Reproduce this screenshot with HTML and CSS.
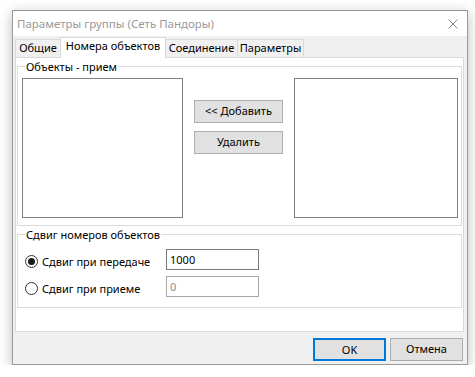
FILE: index.html
```html
<!DOCTYPE html>
<html>
<head>
<meta charset="utf-8">
<link rel="stylesheet" href="styles.css">
</head>
<body>
<div class="window">
  <div class="titlebar">
    <span class="title">Параметры группы (Сеть Пандоры)</span>
    <svg class="close" width="10" height="10" viewBox="0 0 10 10"><path d="M0.5 0.5 L9.5 9.5 M9.5 0.5 L0.5 9.5" stroke="#808080" stroke-width="1"/></svg>
  </div>
  <div class="body">
    <div class="tabs">
      <div class="tab t1">Общие</div>
      <div class="tab t2 active">Номера объектов</div>
      <div class="tab t3">Соединение</div>
      <div class="tab t4">Параметры</div>
    </div>
    <div class="panel">
      <fieldset class="group g1">
        <legend>Объекты - прием</legend>
        <div class="g1-inner">
          <div class="list left"></div>
          <div class="btns">
            <div class="btn">&lt;&lt; Добавить</div>
            <div class="btn">Удалить</div>
          </div>
          <div class="list right"></div>
        </div>
      </fieldset>
      <fieldset class="group g2">
        <legend>Сдвиг номеров объектов</legend>
        <div class="g2-inner">
          <div class="opt"><span class="radio checked"></span><span>Сдвиг при передаче</span></div>
          <div class="field">1000</div>
          <div class="opt"><span class="radio"></span><span>Сдвиг при приеме</span></div>
          <div class="field disabled">0</div>
        </div>
      </fieldset>
    </div>
    <div class="footer">
      <div class="btn dlg ok">OK</div>
      <div class="btn dlg">Отмена</div>
    </div>
  </div>
</div>
</body>
</html>
```
FILE: styles.css
```css
* { box-sizing: border-box; }
html, body { margin: 0; padding: 0; background: #fff; }
body {
  font-family: "Noto Sans", "Open Sans", sans-serif;
  font-size: 11px;
  color: #000;
}
.window {
  margin: 10px 0 0 12px;
  width: 456px;
  height: 355px;
  border: 1px solid #9a9a9a;
  background: #f0f0f0;
  box-shadow: 0 3px 12px rgba(0,0,0,0.28);
  display: flex;
  flex-direction: column;
}
.titlebar {
  height: 25px;
  flex: none;
  background: #fff;
  display: flex;
  align-items: center;
  justify-content: space-between;
  padding: 0 9px 0 4px;
}
.title { color: #999; line-height: 16px; font-size: 11.5px; }
.close { display: block; }
.body {
  flex: 1;
  display: flex;
  flex-direction: column;
  padding: 0 3px 0 2px;
}
.tabs {
  height: 21px;
  flex: none;
  display: flex;
  align-items: flex-end;
}
.tab {
  height: 18px;
  border: 1px solid #d9d9d9;
  border-bottom: none;
  background: #f0f0f0;
  text-align: center;
  line-height: 16px;
  white-space: nowrap;
  margin-left: -1px;
}
.t1 { width: 46px; margin-left: 0; }
.t2 { width: 106px; }
.t3 { width: 73px; }
.t4 { width: 67px; }
.tab.active {
  height: 21px;
  background: #fff;
  margin-bottom: -1px;
  position: relative;
  z-index: 1;
  line-height: 15px;
}
.panel {
  height: 275px;
  flex: none;
  background: #fff;
  border: 1px solid #d9d9d9;
  padding: 0 1px;
}
.group {
  margin: 0;
  padding: 0;
  border: 1px solid #dcdcdc;
  min-width: 0;
}
.group legend {
  margin-left: 7px;
  padding: 0 1px;
  line-height: 17px;
  height: 17px;
}
.g1 { height: 168px; }
.g1-inner {
  display: flex;
  padding: 3px 3px 0 4px;
  gap: 11px;
}
.list {
  height: 140px;
  border: 1px solid #828282;
  background: #fff;
}
.list.left { width: 161px; }
.list.right { width: 164px; }
.btns {
  width: 89px;
  padding-top: 22px;
  display: flex;
  flex-direction: column;
  gap: 8px;
}
.btn {
  height: 23px;
  background: #e1e1e1;
  border: 1px solid #adadad;
  text-align: center;
  line-height: 20px;
  white-space: nowrap;
}
.g2 { height: 82px; }
.g2-inner {
  display: grid;
  grid-template-columns: 148px 93px;
  grid-auto-rows: 21px;
  row-gap: 6px;
  padding: 6px 0 0 0;
}
.opt {
  display: flex;
  align-items: center;
  gap: 4px;
  padding: 3px 0 0 7px;
}
.radio {
  width: 13px;
  height: 13px;
  border-radius: 50%;
  border: 1px solid #333;
  background: #fff;
  display: flex;
  align-items: center;
  justify-content: center;
  flex: none;
}
.radio.checked::after {
  content: "";
  width: 7px;
  height: 7px;
  border-radius: 50%;
  background: #1a1a1a;
}
.field {
  border: 1px solid #7a7a7a;
  background: #fff;
  padding-left: 3px;
  line-height: 19px;
}
.field.disabled {
  border-color: #a8a8a8;
  color: #8c8c8c;
}
.footer {
  flex: 1;
  display: flex;
  justify-content: flex-end;
  gap: 4px;
  padding: 6px 1px 0 0;
}
.btn.dlg { width: 73px; }
.btn.ok { border: 2px solid #0078d7; line-height: 19px; }
```
